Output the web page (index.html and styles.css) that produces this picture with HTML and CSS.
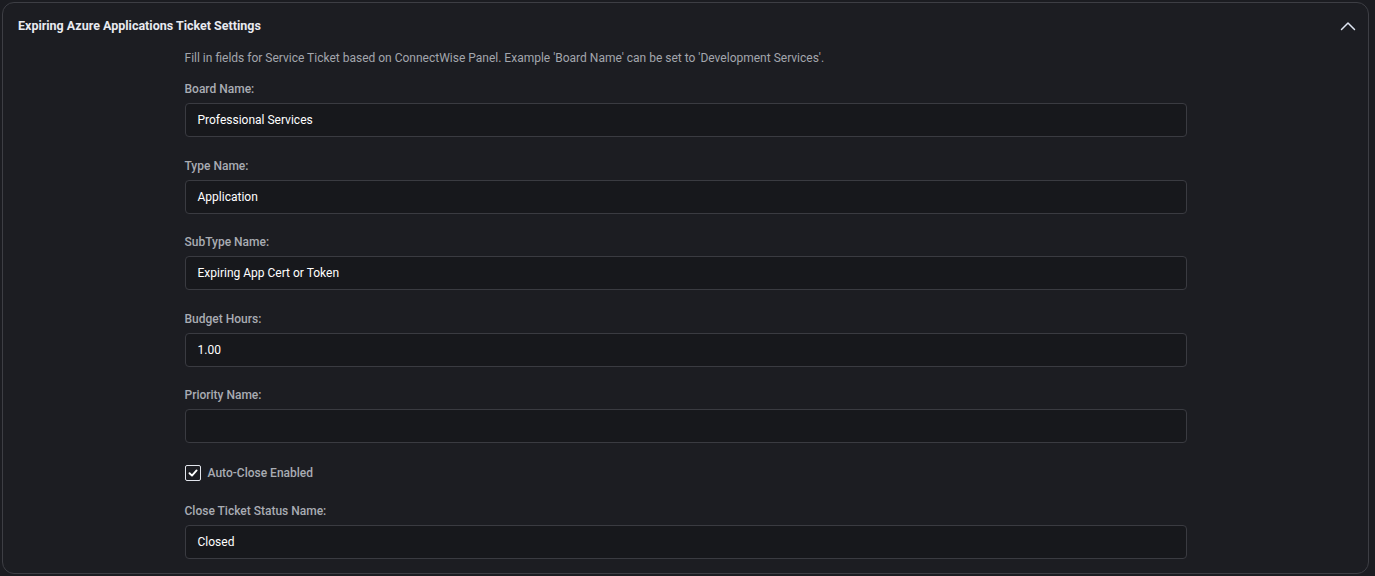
FILE: index.html
```html
<!DOCTYPE html>
<html lang="en">
<head>
<meta charset="utf-8">
<title>Expiring Azure Applications Ticket Settings</title>
<link rel="stylesheet" href="styles.css">
</head>
<body>
<section class="card">
  <header class="card-header">
    <h2 class="card-title">Expiring Azure Applications Ticket Settings</h2>
    <button class="collapse-btn" type="button" aria-label="Collapse">
      <svg width="16" height="10" viewBox="0 0 16 10" fill="none"><path d="M1.5 8.5 L8 2 L14.5 8.5" stroke="#dfe5f2" stroke-width="1.5" stroke-linecap="round" stroke-linejoin="round"/></svg>
    </button>
  </header>
  <div class="card-body">
    <div class="form">
      <p class="hint">Fill in fields for Service Ticket based on ConnectWise Panel. Example 'Board Name' can be set to 'Development Services'.</p>
      <div class="field">
        <label class="label">Board Name:</label>
        <div class="input">Professional Services</div>
      </div>
      <div class="field">
        <label class="label">Type Name:</label>
        <div class="input">Application</div>
      </div>
      <div class="field">
        <label class="label">SubType Name:</label>
        <div class="input">Expiring App Cert or Token</div>
      </div>
      <div class="field">
        <label class="label">Budget Hours:</label>
        <div class="input">1.00</div>
      </div>
      <div class="field">
        <label class="label">Priority Name:</label>
        <div class="input"></div>
      </div>
      <div class="check-row">
        <span class="checkbox">
          <svg width="10" height="10" viewBox="0 0 10 10" fill="none"><path d="M1.5 5.2 L4 7.6 L8.6 2.4" stroke="#ffffff" stroke-width="1.9" stroke-linecap="round" stroke-linejoin="round"/></svg>
        </span>
        <span class="check-label">Auto-Close Enabled</span>
      </div>
      <div class="field last">
        <label class="label">Close Ticket Status Name:</label>
        <div class="input">Closed</div>
      </div>
    </div>
  </div>
</section>
</body>
</html>
```
FILE: styles.css
```css
html, body {
  margin: 0;
  padding: 0;
  background: #1b1c21;
}
body {
  padding: 2px 6px 3px 2px;
  font-family: Roboto, "Liberation Sans", Arial, sans-serif;
  color: #e6e8ec;
}
.card {
  height: 572px;
  box-sizing: border-box;
  border: 1px solid #3d3e44;
  border-radius: 12px;
  background: #1c1d22;
  display: flex;
  flex-direction: column;
}
.card-header {
  display: flex;
  align-items: center;
  justify-content: space-between;
  padding: 14px 12px 0 15px;
  height: 18px;
  box-sizing: content-box;
}
.card-title {
  margin: 0;
  font-size: 12.5px;
  font-weight: 700;
  line-height: 18px;
  color: #e8eaf0;
}
.collapse-btn {
  border: 0;
  background: transparent;
  padding: 0;
  width: 16px;
  height: 18px;
  display: flex;
  align-items: center;
  justify-content: center;
  cursor: pointer;
}
.form {
  width: 1002px;
  margin: 0 auto;
  padding-top: 15px;
}
.hint {
  margin: 0 0 15px;
  font-size: 12px;
  line-height: 16px;
  color: #a3a6ad;
}
.field {
  display: flex;
  flex-direction: column;
  gap: 5px;
  margin-bottom: 20.5px;
}
.field.last {
  margin-bottom: 0;
}
.label {
  font-size: 12px;
  line-height: 17px;
  font-weight: 500;
  color: #a9acb3;
}
.input {
  height: 34px;
  box-sizing: border-box;
  border: 1px solid #3a3b41;
  border-radius: 4px;
  background: #17181c;
  padding: 0 12px;
  display: flex;
  align-items: center;
  font-size: 12px;
  font-weight: 400;
  color: #ffffff;
}
.check-row {
  display: flex;
  align-items: center;
  gap: 7px;
  height: 18px;
  margin-bottom: 21px;
}
.checkbox {
  width: 16px;
  height: 16px;
  box-sizing: border-box;
  border: 1.5px solid #e2e5ec;
  border-radius: 2px;
  display: flex;
  align-items: center;
  justify-content: center;
}
.check-label {
  font-size: 12px;
  font-weight: 500;
  color: #a9acb3;
}
```
